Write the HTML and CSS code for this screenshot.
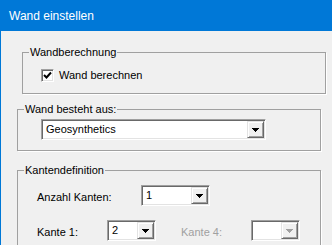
FILE: index.html
```html
<!DOCTYPE html>
<html lang="de">
<head>
    <meta charset="UTF-8">
    <meta name="viewport" content="width=device-width, initial-scale=1.0">
    <title>Wand einstellen</title>
    <link rel="stylesheet" href="styles.css">
</head>
<body>
    <div class="window">
        <div class="titlebar">Wand einstellen</div>
        <div class="dialog">
            <fieldset class="group group-calc">
                <legend>Wandberechnung</legend>
                <div class="group-body calc-body">
                    <label class="check">
                        <span class="check-box">
                            <svg width="9" height="9" viewBox="0 0 9 9"><path d="M1 4 L3.5 6.5 L8 1.5" fill="none" stroke="#000" stroke-width="2"/></svg>
                        </span>
                        Wand berechnen
                    </label>
                </div>
            </fieldset>

            <fieldset class="group group-material">
                <legend>Wand besteht aus:</legend>
                <div class="group-body material-body">
                    <div class="combo combo-wide">
                        <span class="combo-value">Geosynthetics</span>
                        <span class="combo-btn"><svg width="7" height="4" viewBox="0 0 7 4"><polygon points="0,0 7,0 3.5,4" fill="#000"/></svg></span>
                    </div>
                </div>
            </fieldset>

            <fieldset class="group group-edges">
                <legend>Kantendefinition</legend>
                <div class="group-body edges-body">
                    <div class="edge-row">
                        <span class="field-label label-count">Anzahl Kanten:</span>
                        <div class="combo combo-count">
                            <span class="combo-value">1</span>
                            <span class="combo-btn"><svg width="7" height="4" viewBox="0 0 7 4"><polygon points="0,0 7,0 3.5,4" fill="#000"/></svg></span>
                        </div>
                    </div>
                    <div class="edge-row">
                        <span class="field-label label-edge">Kante 1:</span>
                        <div class="combo combo-small">
                            <span class="combo-value">2</span>
                            <span class="combo-btn"><svg width="7" height="4" viewBox="0 0 7 4"><polygon points="0,0 7,0 3.5,4" fill="#000"/></svg></span>
                        </div>
                        <span class="field-label label-edge label-disabled">Kante 4:</span>
                        <div class="combo combo-small combo-disabled">
                            <span class="combo-value"></span>
                            <span class="combo-btn"><svg width="7" height="4" viewBox="0 0 7 4"><polygon points="0,0 7,0 3.5,4" fill="#a0a0a0"/></svg></span>
                        </div>
                    </div>
                </div>
            </fieldset>
        </div>
    </div>
</body>
</html>
```

FILE: styles.css
```css
body {
    margin: 0;
    width: 332px;
    height: 245px;
    overflow: hidden;
    font-family: "Liberation Sans", Arial, sans-serif;
    font-size: 11px;
    color: #000;
    background-color: #f0f0f0;
}
.window {
    height: 245px;
    overflow: hidden;
    border-left: 1px solid #0078d7;
    background-color: #f0f0f0;
}
.titlebar {
    height: 31px;
    display: flex;
    align-items: center;
    padding-left: 8px;
    background-color: #0078d7;
    color: white;
    font-size: 12px;
}
.dialog {
    padding-top: 15px;
}
.group {
    box-sizing: border-box;
    width: 304px;
    margin: 0;
    padding: 0;
    border: 1px solid #a0a0a0;
    box-shadow: 1px 1px 0 #fff;
}
.group legend {
    margin-left: 6px;
    padding: 0 1px;
    line-height: 13px;
}
.group-calc {
    margin-left: 21px;
}
.group-material {
    margin-left: 16px;
    margin-top: 9px;
}
.group-edges {
    margin-left: 16px;
    margin-top: 13px;
}
.calc-body {
    padding: 10px 0 11px 18px;
}
.material-body {
    padding: 3px 0 10px 23px;
}
.edges-body {
    display: flex;
    flex-direction: column;
    gap: 14px;
    padding: 8px 0 20px 19px;
}
.check {
    display: flex;
    align-items: center;
    gap: 5px;
    line-height: 13px;
}
.check-box {
    box-sizing: border-box;
    width: 13px;
    height: 13px;
    display: flex;
    align-items: center;
    justify-content: center;
    background-color: white;
    border: 1px solid;
    border-color: #a0a0a0 #fff #fff #a0a0a0;
    box-shadow: inset 1px 1px 0 #696969, inset -1px -1px 0 #e3e3e3;
}
.combo {
    box-sizing: border-box;
    height: 21px;
    display: flex;
    align-items: center;
    padding: 1px;
    background-color: white;
    border: 1px solid;
    border-color: #a0a0a0 #fff #fff #a0a0a0;
    box-shadow: inset 1px 1px 0 #696969, inset -1px -1px 0 #e3e3e3;
}
.combo-value {
    flex: 1;
    padding-left: 3px;
    line-height: 17px;
}
.combo-btn {
    box-sizing: border-box;
    width: 17px;
    height: 17px;
    display: flex;
    align-items: center;
    justify-content: center;
    background-color: #f0f0f0;
    border: 1px solid;
    border-color: #e3e3e3 #696969 #696969 #e3e3e3;
    box-shadow: inset 1px 1px 0 #fff, inset -1px -1px 0 #a0a0a0;
}
.combo-btn svg {
    shape-rendering: crispEdges;
}
.combo-wide {
    width: 225px;
}
.combo-count {
    width: 69px;
}
.combo-small {
    width: 49px;
}
.edge-row {
    display: flex;
    align-items: center;
}
.field-label {
    padding-top: 2px;
}
.label-count {
    width: 104px;
}
.label-edge {
    width: 70px;
}
.label-disabled {
    margin-left: 25px;
    color: #a0a0a0;
}
```
